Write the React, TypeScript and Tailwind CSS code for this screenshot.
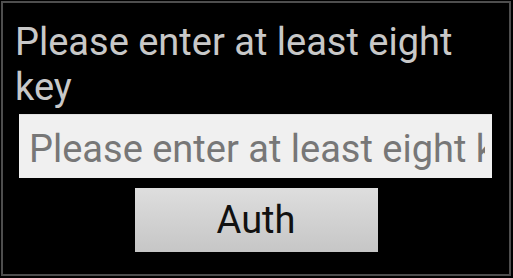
export default function App() {
	return (
		<div className="w-[513px] h-[278px] bg-black pt-px pl-px font-['Roboto',sans-serif]">
			<div className="w-[510px] h-[275px] border-2 border-[#4e4e4e] flex flex-col pt-[17px]">
				<p className="pl-3 pr-6 text-[38px] leading-[45px] text-[#c8c8c8]">
					Please enter at least eight key
				</p>
				<div className="mt-1 ml-4 w-[473px] h-16 bg-[#f0f0f0] border-t border-[#e2e2e2] flex items-center pl-[10px] pr-[7px] pt-1 overflow-hidden">
					<input
						className="w-full bg-transparent outline-none text-[38px] leading-[44px] text-[#222] placeholder:text-[#777]"
						placeholder="Please enter at least eight key"
					/>
				</div>
				<button className="mt-[10px] self-center w-[243px] h-16 bg-linear-to-b from-[#dedede] to-[#c6c6c6] text-[38px] leading-[44px] text-[#111] flex items-center justify-center">
					Auth
				</button>
			</div>
		</div>
	);
}
